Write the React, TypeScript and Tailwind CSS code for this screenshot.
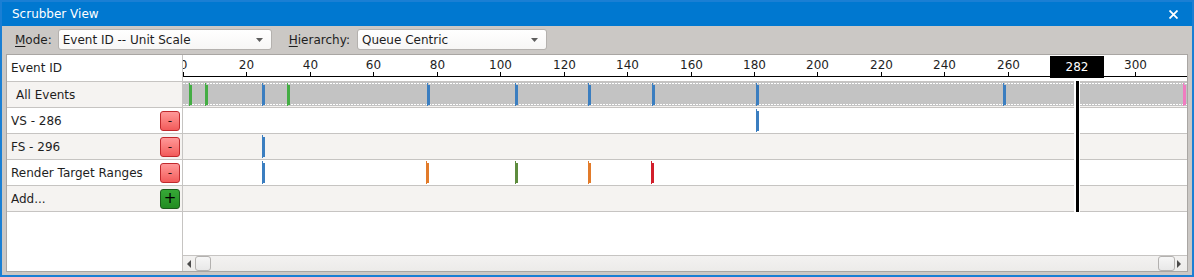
import React from "react";

const SCALE = 3.172;
const TICKS = [0, 20, 40, 60, 80, 100, 120, 140, 160, 180, 200, 220, 240, 260, 300];

type M = { x: number; c: string };

const ALL: M[] = [
  { x: 6, c: "bg-[#44ad44]" },
  { x: 22, c: "bg-[#44ad44]" },
  { x: 79, c: "bg-[#3b7ec0]" },
  { x: 104, c: "bg-[#44ad44]" },
  { x: 244, c: "bg-[#3b7ec0]" },
  { x: 332, c: "bg-[#3b7ec0]" },
  { x: 405, c: "bg-[#3b7ec0]" },
  { x: 469, c: "bg-[#3b7ec0]" },
  { x: 573, c: "bg-[#3b7ec0]" },
  { x: 820, c: "bg-[#3b7ec0]" },
  { x: 1000, c: "bg-[#f07cc0]" },
];

const ROWS: { label: string; bg: string; btn: "minus" | "plus"; markers: M[] }[] = [
  { label: "VS - 286", bg: "bg-white", btn: "minus", markers: [{ x: 573, c: "bg-[#3b7ec0]" }] },
  { label: "FS - 296", bg: "bg-[#f5f3f1]", btn: "minus", markers: [{ x: 79, c: "bg-[#3b7ec0]" }] },
  {
    label: "Render Target Ranges",
    bg: "bg-white",
    btn: "minus",
    markers: [
      { x: 79, c: "bg-[#3b7ec0]" },
      { x: 243, c: "bg-[#e27b2a]" },
      { x: 332, c: "bg-[#5e8c3e]" },
      { x: 405, c: "bg-[#e27b2a]" },
      { x: 468, c: "bg-[#d21f2b]" },
    ],
  },
  { label: "Add...", bg: "bg-[#f5f3f1]", btn: "plus", markers: [] },
];

function Marker({ m }: { m: M }) {
  return (
    <div className="absolute top-[1px] bottom-[1px] w-[3px]" style={{ left: m.x }}>
      <div className={`absolute left-0 top-0 bottom-0 w-[1px] ${m.c}`} />
      <div className={`absolute left-[1px] top-[2px] bottom-[1px] w-[2px] ${m.c}`} />
    </div>
  );
}

function Combo({ text, w }: { text: string; w: string }) {
  return (
    <div
      className={`${w} h-[21px] rounded-[3px] border border-[#b4b1ae] bg-gradient-to-b from-white to-[#f7f6f5] flex items-center justify-between pl-[4px] pr-[8px]`}
    >
      <span>{text}</span>
      <svg width="7" height="4" viewBox="0 0 7 4">
        <path d="M0 0 L7 0 L3.5 4 Z" fill="#5d5d5d" />
      </svg>
    </div>
  );
}

function PanelButton({ kind }: { kind: "minus" | "plus" }) {
  if (kind === "minus") {
    return (
      <div className="w-[20px] h-[20px] rounded-[3px] border border-[#c0282c] bg-gradient-to-b from-[#ff9898] to-[#f25a5a] flex items-center justify-center text-[#2a1010] leading-none">
        -
      </div>
    );
  }
  return (
    <div className="w-[20px] h-[20px] rounded-[3px] border border-[#1c5c1c] bg-gradient-to-b from-[#36a836] to-[#228c22] flex items-center justify-center text-black text-[15px] leading-none">
      +
    </div>
  );
}

export default function App() {
  return (
    <div className="w-[1194px] h-[277px] border-2 border-[#1a7fd4] bg-[#cbc8c5] flex flex-col overflow-hidden font-['DejaVu_Sans',sans-serif] text-[12px] text-[#1e1e1e]">
      {/* title bar */}
      <div className="h-[24px] shrink-0 bg-[#0078d0] flex items-center justify-between pl-[10px] pr-[14px] text-white">
        <span>Scrubber View</span>
        <svg width="9" height="9" viewBox="0 0 9 9">
          <path d="M0.5 0.5 L8.5 8.5 M8.5 0.5 L0.5 8.5" stroke="#ffffff" strokeWidth="1.8" />
        </svg>
      </div>

      {/* toolbar */}
      <div className="h-[28px] shrink-0 flex items-center pl-[13px] pb-[1px]">
        <span>
          <span className="underline underline-offset-2">M</span>ode:
        </span>
        <div className="ml-[6px]">
          <Combo text="Event ID -- Unit Scale" w="w-[214px]" />
        </div>
        <span className="ml-[17px]">
          <span className="underline underline-offset-2">H</span>ierarchy:
        </span>
        <div className="ml-[7px]">
          <Combo text="Queue Centric" w="w-[190px]" />
        </div>
      </div>

      {/* main panel */}
      <div className="mx-[4px] h-[218px] shrink-0 border border-[#a9a6a3] bg-white flex">
        {/* left pane */}
        <div className="w-[176px] shrink-0 border-r border-[#c6c4c2] flex flex-col">
          <div className="h-[27px] shrink-0 border-b border-[#c6c4c2] flex items-center pl-[4px]">Event ID</div>
          <div className="h-[26px] shrink-0 border-b border-[#c6c4c2] bg-[#f5f3f1] flex items-center pl-[9px]">
            All Events
          </div>
          {ROWS.map((r) => (
            <div
              key={r.label}
              className={`h-[26px] shrink-0 border-b border-[#c6c4c2] ${r.bg} flex items-center justify-between pl-[4px] pr-[2px]`}
            >
              <span>{r.label}</span>
              <PanelButton kind={r.btn} />
            </div>
          ))}
          <div className="flex-1" />
        </div>

        {/* right pane */}
        <div className="flex-1 min-w-0 flex flex-col overflow-hidden">
          {/* ruler */}
          <div className="h-[27px] shrink-0 border-b border-[#c6c4c2] relative overflow-hidden">
            <div className="absolute left-0 right-0 top-[21px] h-[1px] bg-black" />
            {TICKS.map((v) => (
              <React.Fragment key={v}>
                <div
                  className="absolute top-[17px] h-[5px] w-[1px] bg-black"
                  style={{ left: Math.round(v * SCALE) }}
                />
                <div
                  className="absolute top-[3px] leading-[14px] -translate-x-1/2"
                  style={{ left: Math.round(v * SCALE) + 0.5 }}
                >
                  {v}
                </div>
              </React.Fragment>
            ))}
            <div className="absolute left-[867px] top-[1px] w-[54px] h-[22px] bg-black text-white flex items-center justify-center leading-[14px]">
              282
            </div>
          </div>

          {/* rows */}
          <div className="relative shrink-0">
            <div className="h-[26px] border-b border-[#c6c4c2] bg-[#f5f3f1] relative">
              <div className="absolute left-0 right-0 top-0 h-[24px] bg-[#c3c3c3]">
                <div className="absolute left-0 right-0 top-[1px] h-[1px] bg-[repeating-linear-gradient(90deg,#ffffff_0px,#ffffff_2px,transparent_2px,transparent_3px)]" />
                <div className="absolute left-0 right-0 bottom-[1px] h-[1px] bg-[repeating-linear-gradient(90deg,#ffffff_0px,#ffffff_2px,transparent_2px,transparent_3px)]" />
              </div>
              {ALL.map((m, i) => (
                <Marker key={i} m={m} />
              ))}
            </div>
            {ROWS.map((r) => (
              <div key={r.label} className={`h-[26px] border-b border-[#c6c4c2] ${r.bg} relative`}>
                {r.markers.map((m, i) => (
                  <Marker key={i} m={m} />
                ))}
              </div>
            ))}
            {/* cursor */}
            <div className="absolute left-[891px] top-[-1px] bottom-0 w-[6px] border-l-2 border-r border-white bg-black" />
          </div>

          <div className="flex-1" />

          {/* scrollbar */}
          <div className="h-[16px] shrink-0 border-t border-[#c6c4c2] bg-gradient-to-b from-[#f3f2f1] to-[#ecebe9] flex items-center">
            <svg className="ml-[4px]" width="4" height="8" viewBox="0 0 4 8">
              <path d="M4 0 L0 4 L4 8 Z" fill="#4a4a4a" />
            </svg>
            <div className="ml-[4px] w-[16px] h-[15px] rounded-[3px] border border-[#b3b1af] bg-gradient-to-b from-[#f6f6f6] to-[#e8e8e8]" />
            <div className="flex-1" />
            <div className="w-[17px] h-[15px] rounded-[3px] border border-[#b3b1af] bg-gradient-to-b from-[#f6f6f6] to-[#e8e8e8]" />
            <svg className="ml-[2px] mr-[6px]" width="4" height="8" viewBox="0 0 4 8">
              <path d="M0 0 L4 4 L0 8 Z" fill="#4a4a4a" />
            </svg>
          </div>
        </div>
      </div>
    </div>
  );
}
